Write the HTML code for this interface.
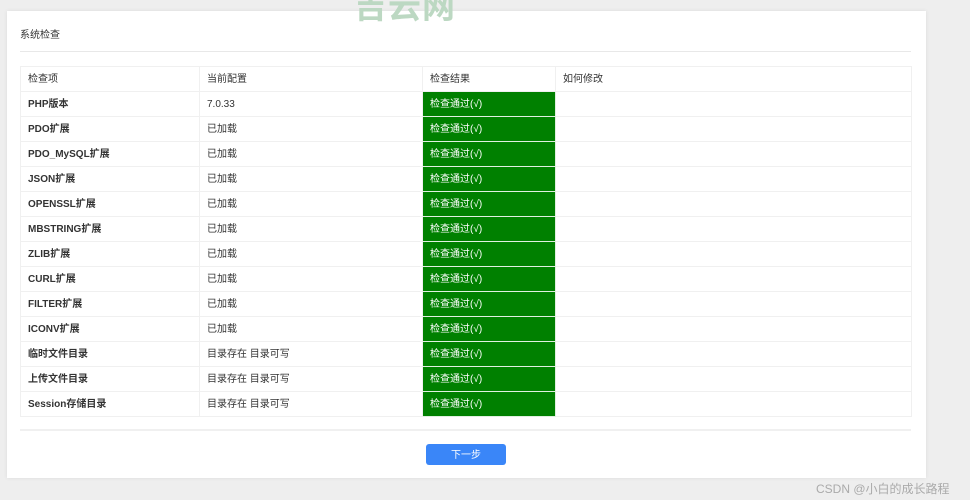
<!DOCTYPE html>
<html><head><meta charset="utf-8"><style>
body{margin:0;width:970px;height:500px;background:#eee;font-family:"Liberation Sans","Noto Sans CJK SC",sans-serif;font-size:10px;color:#333;position:relative;overflow:hidden}
.card{position:absolute;left:7px;top:11px;width:919px;height:467px;background:#fff;box-shadow:0 0 4px rgba(0,0,0,.08)}
.title{position:absolute;left:13px;top:15px;font-size:10px;color:#333}
.hr1{position:absolute;left:13px;top:40px;width:891px;height:1px;background:#e8e8e8}
table{position:absolute;left:13px;top:55px;width:892px;border-collapse:collapse;table-layout:fixed}
td{border:1px solid #f0f0f0;padding:2px 7px 0;box-sizing:border-box;font-size:10px;white-space:nowrap;vertical-align:middle;line-height:12px;height:25px}
td.g{background:#008000;color:#fff;border-color:#e0f0e0}
tr td:first-child{font-weight:bold;color:#333}
tr.h td{font-weight:normal}
.hr2{position:absolute;left:13px;top:418px;width:891px;height:2px;background:#f0f0f0}
.btn{position:absolute;left:419px;top:433px;width:80px;height:21px;background:#3a86f8;border-radius:3px;color:#fff;text-align:center;line-height:23px;font-size:10px}
.wm{position:absolute;left:354px;top:-20px;font-size:33px;font-weight:bold;color:#bcd8c2;letter-spacing:1px}
.csdn{position:absolute;left:816px;top:480px;font-size:12px;color:#aaa}
</style></head><body>
<div class="card">
<div class="title">系统检查</div>
<div class="hr1"></div>
<table>
<colgroup><col style="width:179px"><col style="width:223px"><col style="width:133px"><col></colgroup>
<tr class="h"><td>检查项</td><td>当前配置</td><td>检查结果</td><td>如何修改</td></tr>
<tr><td>PHP版本</td><td>7.0.33</td><td class="g">检查通过(√)</td><td></td></tr>
<tr><td>PDO扩展</td><td>已加载</td><td class="g">检查通过(√)</td><td></td></tr>
<tr><td>PDO_MySQL扩展</td><td>已加载</td><td class="g">检查通过(√)</td><td></td></tr>
<tr><td>JSON扩展</td><td>已加载</td><td class="g">检查通过(√)</td><td></td></tr>
<tr><td>OPENSSL扩展</td><td>已加载</td><td class="g">检查通过(√)</td><td></td></tr>
<tr><td>MBSTRING扩展</td><td>已加载</td><td class="g">检查通过(√)</td><td></td></tr>
<tr><td>ZLIB扩展</td><td>已加载</td><td class="g">检查通过(√)</td><td></td></tr>
<tr><td>CURL扩展</td><td>已加载</td><td class="g">检查通过(√)</td><td></td></tr>
<tr><td>FILTER扩展</td><td>已加载</td><td class="g">检查通过(√)</td><td></td></tr>
<tr><td>ICONV扩展</td><td>已加载</td><td class="g">检查通过(√)</td><td></td></tr>
<tr><td>临时文件目录</td><td>目录存在 目录可写</td><td class="g">检查通过(√)</td><td></td></tr>
<tr><td>上传文件目录</td><td>目录存在 目录可写</td><td class="g">检查通过(√)</td><td></td></tr>
<tr><td>Session存储目录</td><td>目录存在 目录可写</td><td class="g">检查通过(√)</td><td></td></tr>
</table>
<div class="hr2"></div>
<div class="btn">下一步</div>
</div>
<div class="wm">吉云网</div>
<div class="csdn">CSDN @小白的成长路程</div>
</body></html>
